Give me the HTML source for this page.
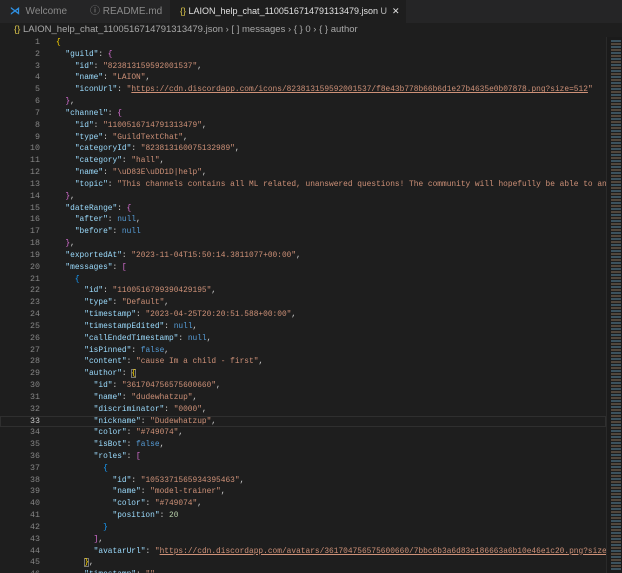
<!DOCTYPE html>
<html><head><meta charset="utf-8"><style>
html,body{margin:0;width:622px;height:573px;overflow:hidden}
body{background:#1e1e1e;font-family:"Liberation Sans",sans-serif;position:relative}
.tabs{position:absolute;left:0;top:0;width:622px;height:23px;background:#252526}
.tab{position:absolute;top:0;height:23px;line-height:23px;font-size:10px;color:#8a8a8a;white-space:nowrap;overflow:hidden}
.tab.a{background:#1e1e1e;color:#e0e0e0}
.crumb{position:absolute;left:0;top:23px;height:14px;line-height:14px;font-size:9.5px;color:#a8a8a8;white-space:nowrap}
.code{position:absolute;left:0;top:37px;width:606px;height:536px;overflow:hidden;font-family:"Liberation Mono",monospace;font-size:7.85px;line-height:11.84px}
.ln{display:inline-block;width:40px;text-align:right;color:#858585;margin-right:16px;font-size:8.3px}
.k{color:#9cdcfe}.s{color:#ce9178}.u{color:#ce9178;text-decoration:underline}.n{color:#b5cea8}.b{color:#569cd6}
.g{color:#ffd700}.m{color:#da70d6}.c{color:#179fff}
.row{height:11.84px;color:#d4d4d4;white-space:pre;overflow:hidden}
.cur{box-shadow:inset 0 0 0 1px #2f2f2f}
.minimap{position:absolute;left:606px;top:37px;width:16px;height:536px;background:#1b1b1b;border-left:1px solid #2a2a2a}
.mm{position:absolute;left:611px;top:40px;width:10px;height:530px;background:repeating-linear-gradient(#4a6a7a 0 2px,#1e1e1e 2px 3px,#6a5a4a 3px 5px,#1e1e1e 5px 6px);opacity:.7}
</style></head><body>
<div class="tabs">
<div class="tab" style="left:0;width:80px"><span style="color:#2f8fe0;margin-left:10px;font-weight:bold">⋊</span>&nbsp; Welcome</div>
<div class="tab" style="left:82px;width:86px"><span style="margin-left:8px">ⓘ</span> README.md</div>
<div class="tab a" style="left:170px;width:236px;font-size:9px"><span style="color:#d7c24a;margin-left:10px">{}</span> LAION_help_chat_1100516714791313479.json <span style="color:#bbb">U</span>&nbsp; ✕</div>
</div>
<div class="crumb"><span style="color:#d7c24a;margin-left:14px">{}</span> LAION_help_chat_1100516714791313479.json › [ ] messages › { } 0 › { } author</div>
<div class="code"><div class="row"><span class="ln">1</span><span class="g">{</span></div><div class="row"><span class="ln">2</span>  <span class="k">"guild"</span>: <span class="m">{</span></div><div class="row"><span class="ln">3</span>    <span class="k">"id"</span>: <span class="s">"823813159592001537"</span>,</div><div class="row"><span class="ln">4</span>    <span class="k">"name"</span>: <span class="s">"LAION"</span>,</div><div class="row"><span class="ln">5</span>    <span class="k">"iconUrl"</span>: <span class="s">"</span><span class="u">https://cdn.discordapp.com/icons/823813159592001537/f8e43b778b66b6d1e27b4635e0b07878.png?size=512</span><span class="s">"</span></div><div class="row"><span class="ln">6</span>  <span class="m">}</span>,</div><div class="row"><span class="ln">7</span>  <span class="k">"channel"</span>: <span class="m">{</span></div><div class="row"><span class="ln">8</span>    <span class="k">"id"</span>: <span class="s">"1100516714791313479"</span>,</div><div class="row"><span class="ln">9</span>    <span class="k">"type"</span>: <span class="s">"GuildTextChat"</span>,</div><div class="row"><span class="ln">10</span>    <span class="k">"categoryId"</span>: <span class="s">"823813160075132989"</span>,</div><div class="row"><span class="ln">11</span>    <span class="k">"category"</span>: <span class="s">"hall"</span>,</div><div class="row"><span class="ln">12</span>    <span class="k">"name"</span>: <span class="s">"\uD83E\uDD1D|help"</span>,</div><div class="row"><span class="ln">13</span>    <span class="k">"topic"</span>: <span class="s">"This channels contains all ML related, unanswered questions! The community will hopefully be able to answer"</span></div><div class="row"><span class="ln">14</span>  <span class="m">}</span>,</div><div class="row"><span class="ln">15</span>  <span class="k">"dateRange"</span>: <span class="m">{</span></div><div class="row"><span class="ln">16</span>    <span class="k">"after"</span>: <span class="b">null</span>,</div><div class="row"><span class="ln">17</span>    <span class="k">"before"</span>: <span class="b">null</span></div><div class="row"><span class="ln">18</span>  <span class="m">}</span>,</div><div class="row"><span class="ln">19</span>  <span class="k">"exportedAt"</span>: <span class="s">"2023-11-04T15:50:14.3811077+00:00"</span>,</div><div class="row"><span class="ln">20</span>  <span class="k">"messages"</span>: <span class="m">[</span></div><div class="row"><span class="ln">21</span>    <span class="c">{</span></div><div class="row"><span class="ln">22</span>      <span class="k">"id"</span>: <span class="s">"1100516799390429195"</span>,</div><div class="row"><span class="ln">23</span>      <span class="k">"type"</span>: <span class="s">"Default"</span>,</div><div class="row"><span class="ln">24</span>      <span class="k">"timestamp"</span>: <span class="s">"2023-04-25T20:20:51.588+00:00"</span>,</div><div class="row"><span class="ln">25</span>      <span class="k">"timestampEdited"</span>: <span class="b">null</span>,</div><div class="row"><span class="ln">26</span>      <span class="k">"callEndedTimestamp"</span>: <span class="b">null</span>,</div><div class="row"><span class="ln">27</span>      <span class="k">"isPinned"</span>: <span class="b">false</span>,</div><div class="row"><span class="ln">28</span>      <span class="k">"content"</span>: <span class="s">"cause Im a child - first"</span>,</div><div class="row"><span class="ln">29</span>      <span class="k">"author"</span>: <span class="g" style="box-shadow:inset 0 0 0 1px #777">{</span></div><div class="row"><span class="ln">30</span>        <span class="k">"id"</span>: <span class="s">"361704756575600660"</span>,</div><div class="row"><span class="ln">31</span>        <span class="k">"name"</span>: <span class="s">"dudewhatzup"</span>,</div><div class="row"><span class="ln">32</span>        <span class="k">"discriminator"</span>: <span class="s">"0000"</span>,</div><div class="row cur"><span class="ln" style="color:#c6c6c6">33</span>        <span class="k">"nickname"</span>: <span class="s">"Dudewhatzup"</span>,</div><div class="row"><span class="ln">34</span>        <span class="k">"color"</span>: <span class="s">"#749074"</span>,</div><div class="row"><span class="ln">35</span>        <span class="k">"isBot"</span>: <span class="b">false</span>,</div><div class="row"><span class="ln">36</span>        <span class="k">"roles"</span>: <span class="m">[</span></div><div class="row"><span class="ln">37</span>          <span class="c">{</span></div><div class="row"><span class="ln">38</span>            <span class="k">"id"</span>: <span class="s">"1053371565934395463"</span>,</div><div class="row"><span class="ln">39</span>            <span class="k">"name"</span>: <span class="s">"model-trainer"</span>,</div><div class="row"><span class="ln">40</span>            <span class="k">"color"</span>: <span class="s">"#749074"</span>,</div><div class="row"><span class="ln">41</span>            <span class="k">"position"</span>: <span class="n">20</span></div><div class="row"><span class="ln">42</span>          <span class="c">}</span></div><div class="row"><span class="ln">43</span>        <span class="m">]</span>,</div><div class="row"><span class="ln">44</span>        <span class="k">"avatarUrl"</span>: <span class="s">"</span><span class="u">https://cdn.discordapp.com/avatars/361704756575600660/7bbc6b3a6d83e186663a6b10e46e1c20.png?size=512</span><span class="s">"</span></div><div class="row"><span class="ln">45</span>      <span class="g" style="box-shadow:inset 0 0 0 1px #777">}</span>,</div><div class="row"><span class="ln">46</span>      <span class="k">"timestamp"</span>: <span class="s">""</span></div></div>
<div class="minimap"></div><div class="mm"></div>
</body></html>
